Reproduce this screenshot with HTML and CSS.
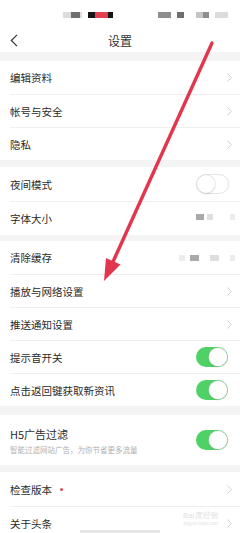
FILE: index.html
```html
<!DOCTYPE html>
<html lang="zh">
<head>
<meta charset="utf-8">
<link rel="stylesheet" href="styles.css">
</head>
<body>
<div class="page">
  <div class="status">
    <span class="blk w8 c-l"></span><span class="blk w9 c-d"></span><span class="blk w2 c-l"></span>
    <span class="blk w7 c-k ml6"></span><span class="blk w13 c-r"></span><span class="blk w5 c-k"></span>
    <span class="blk w13 c-m ml45"></span>
    <span class="blk w7 c-d ml6"></span>
    <span class="blk w7 c-ll ml12"></span><span class="blk w6 c-m"></span>
    <span class="blk w13 c-l ml6"></span>
  </div>
  <div class="nav">
    <svg class="back" width="8" height="13" viewBox="0 0 8 13"><path d="M7 0.8 L1.3 6.5 L7 12.2" fill="none" stroke="#333" stroke-width="1.2"/></svg>
    <div class="title">设置</div>
    <div></div>
  </div>

  <div class="group g-top9">
    <div class="row"><div class="inner"><span class="label">编辑资料</span><svg class="chev" width="5" height="9" viewBox="0 0 5 9"><path d="M0.5 0.5 L4.3 4.5 L0.5 8.5" fill="none" stroke="#cfcfcf" stroke-width="1"/></svg></div></div>
    <div class="row"><div class="inner"><span class="label">帐号与安全</span><svg class="chev" width="5" height="9" viewBox="0 0 5 9"><path d="M0.5 0.5 L4.3 4.5 L0.5 8.5" fill="none" stroke="#cfcfcf" stroke-width="1"/></svg></div></div>
    <div class="row"><div class="inner"><span class="label">隐私</span><svg class="chev" width="5" height="9" viewBox="0 0 5 9"><path d="M0.5 0.5 L4.3 4.5 L0.5 8.5" fill="none" stroke="#cfcfcf" stroke-width="1"/></svg></div></div>
  </div>

  <div class="group g-top7">
    <div class="row tall"><div class="inner"><span class="label">夜间模式</span><span class="toggle off"><span class="knob"></span></span></div></div>
    <div class="row tall"><div class="inner"><span class="label">字体大小</span>
      <span class="vals"><span class="blk w8 c-m2"></span><span class="blk w3 c-w"></span><span class="blk w6 c-ll2"></span><span class="blk w17 c-w"></span><span class="blk w5 c-l2"></span></span>
    </div></div>
  </div>

  <div class="group g-top6">
    <div class="row"><div class="inner"><span class="label">清除缓存</span>
      <span class="vals cache"><span class="blk w6 c-l2"></span><span class="blk w5 c-w"></span><span class="blk w9 c-m2"></span><span class="blk w11 c-w"></span><span class="blk w9 c-ll2"></span><span class="blk w11 c-w"></span><span class="blk w5 c-l2"></span></span>
    </div></div>
    <div class="row"><div class="inner"><span class="label">播放与网络设置</span><svg class="chev" width="5" height="9" viewBox="0 0 5 9"><path d="M0.5 0.5 L4.3 4.5 L0.5 8.5" fill="none" stroke="#cfcfcf" stroke-width="1"/></svg></div></div>
    <div class="row"><div class="inner"><span class="label">推送通知设置</span><svg class="chev" width="5" height="9" viewBox="0 0 5 9"><path d="M0.5 0.5 L4.3 4.5 L0.5 8.5" fill="none" stroke="#cfcfcf" stroke-width="1"/></svg></div></div>
    <div class="row"><div class="inner"><span class="label">提示音开关</span><span class="toggle on"><span class="knob"></span></span></div></div>
    <div class="row"><div class="inner"><span class="label">点击返回键获取新资讯</span><span class="toggle on"><span class="knob"></span></span></div></div>
  </div>

  <div class="group g-top9">
    <div class="row big"><div class="inner"><div class="twoline"><span class="label">H5广告过滤</span><span class="sub">智能过滤网站广告，为你节省更多流量</span></div><span class="toggle on"><span class="knob"></span></span></div></div>
  </div>

  <div class="group g-top7">
    <div class="row tall"><div class="inner"><span class="label">检查版本<span class="dot"></span></span><svg class="chev" width="5" height="9" viewBox="0 0 5 9"><path d="M0.5 0.5 L4.3 4.5 L0.5 8.5" fill="none" stroke="#cfcfcf" stroke-width="1"/></svg></div></div>
    <div class="row tall"><div class="inner"><span class="label">关于头条</span><svg class="chev" width="5" height="9" viewBox="0 0 5 9"><path d="M0.5 0.5 L4.3 4.5 L0.5 8.5" fill="none" stroke="#cfcfcf" stroke-width="1"/></svg></div></div>
  </div>

  <div class="watermark"><span class="wm1">Bai度经验</span><span class="wm2">jingyan.baidu.com</span></div>
  <div class="homebar"></div>

  <svg class="arrow" width="240" height="533" viewBox="0 0 240 533">
    <line x1="212" y1="43" x2="112" y2="264" stroke="#e2364f" stroke-width="3.4" stroke-linecap="round"/>
    <polygon points="104,281 120.5,264.5 106,258" fill="#e2364f"/>
  </svg>
</div>
</body>
</html>
```

FILE: styles.css
```css
html, body {
  margin: 0;
  padding: 0;
}
body {
  width: 240px;
  height: 533px;
  overflow: hidden;
  background: #f4f4f5;
  font-family: "Noto Sans CJK SC", "Noto Sans", sans-serif;
  color: #2b2b2b;
}
.page {
  position: relative;
  width: 240px;
  height: 533px;
  overflow: hidden;
}
.status {
  height: 26px;
  background: #fff;
  display: flex;
  align-items: flex-start;
  padding-top: 12px;
  padding-left: 63px;
  box-sizing: border-box;
}
.blk {
  display: inline-block;
  height: 6px;
  flex: none;
}
.w2 { width: 2px; } .w3 { width: 3px; } .w5 { width: 5px; } .w6 { width: 6px; }
.w7 { width: 7px; } .w8 { width: 8px; } .w9 { width: 9px; } .w11 { width: 11px; }
.w13 { width: 13px; } .w17 { width: 17px; }
.ml6 { margin-left: 6px; } .ml12 { margin-left: 12px; } .ml45 { margin-left: 45px; }
.c-l { background: #dcdcdc; }
.c-ll { background: #c4c4c4; }
.c-d { background: #6e6e6e; }
.c-m { background: #8e8e8e; }
.c-k { background: #151515; }
.c-r { background: #e4404f; }
.c-w { background: transparent; }
.c-m2 { background: #a9a9a9; }
.c-l2 { background: #ececec; }
.c-ll2 { background: #dedede; }

.nav {
  height: 26px;
  background: #fff;
  display: grid;
  grid-template-columns: 1fr auto 1fr;
  align-items: center;
}
.back {
  margin-left: 10px;
  margin-top: 3px;
}
.title {
  font-size: 12px;
  color: #333;
  margin-top: 3px;
}

.group { background: #fff; }
.g-top9 { margin-top: 9px; }
.g-top7 { margin-top: 7px; }
.g-top6 { margin-top: 6px; }

.row {
  padding-left: 10px;
  height: 33px;
  display: flex;
}
.row.tall { height: 34px; }
.row.big { height: 50px; }
.inner {
  flex: 1;
  display: flex;
  align-items: center;
  justify-content: space-between;
  border-top: 1px solid #efefef;
  padding-right: 8px;
  box-sizing: border-box;
}
.row:first-child .inner { border-top: none; }
.label {
  font-size: 10.5px;
  color: #2b2b2b;
  display: flex;
  align-items: center;
}
.chev { flex: none; }
.toggle {
  position: relative;
  width: 32px;
  height: 20px;
  border-radius: 10px;
  box-sizing: border-box;
  margin-right: 4px;
  flex: none;
}
.toggle.on { background: #4fd166; }
.toggle.off { background: #fff; border: 1px solid #e3e3e3; width: 33px; margin-right: 3px; }
.knob {
  position: absolute;
  top: 1px;
  width: 18px;
  height: 18px;
  border-radius: 50%;
  background: #fff;
  box-shadow: 0 0 0 0.5px #d8d8d8, 0 1px 2px rgba(0,0,0,0.15);
}
.toggle.on .knob { right: 1px; }
.toggle.off .knob { left: 0; top: 0; }
.vals {
  display: flex;
  margin-right: -3px;
  margin-top: -3px;
}
.vals.cache { margin-top: 0; }
.twoline {
  display: flex;
  flex-direction: column;
  gap: 2px;
}
.twoline .label { font-size: 11px; }
.sub {
  font-size: 7.5px;
  color: #b0b0b0;
}
.dot {
  width: 3px;
  height: 3px;
  border-radius: 50%;
  background: #e8474f;
  margin-left: 8px;
}
.watermark {
  position: absolute;
  left: 183px;
  top: 512px;
  display: flex;
  flex-direction: column;
  align-items: center;
  color: #e2e2e2;
  line-height: 1;
}
.wm1 { font-size: 8px; font-family: "Liberation Sans", sans-serif; }
.wm2 { font-size: 4px; margin-top: 1px; }
.homebar {
  position: absolute;
  left: 80px;
  top: 530px;
  width: 80px;
  height: 3px;
  background: #e6e6e6;
}
.arrow {
  position: absolute;
  left: 0;
  top: 0;
  pointer-events: none;
}
```
